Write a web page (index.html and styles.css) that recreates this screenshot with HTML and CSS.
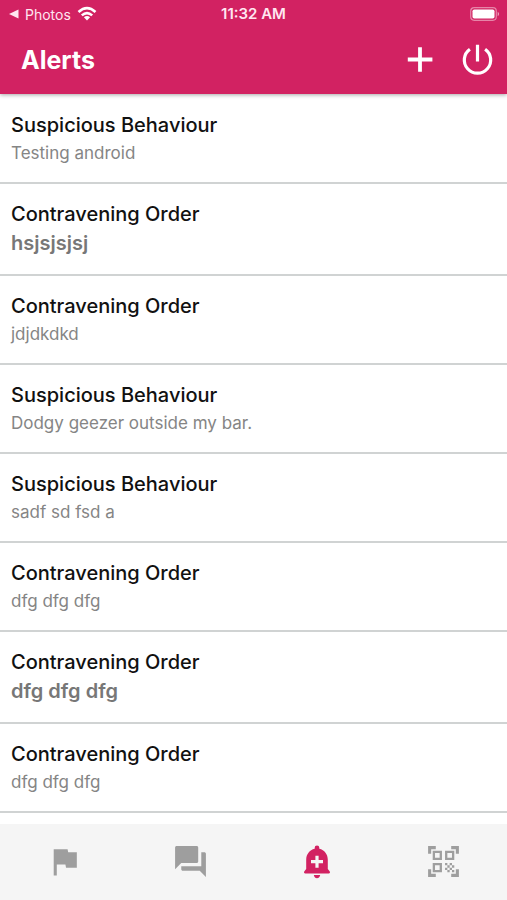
FILE: index.html
```html
<!DOCTYPE html>
<html lang="en">
<head>
<meta charset="utf-8">
<meta name="viewport" content="width=device-width, initial-scale=1">
<title>Alerts</title>
<link rel="stylesheet" href="styles.css">
</head>
<body>
<header class="top">
  <div class="status">
    <div class="status-left">
      <svg width="10" height="10" viewBox="0 0 10 10" fill="currentColor" aria-hidden="true"><path d="M0 5 9.500.5v9z"/></svg>
      <span class="back">Photos</span>
      <svg class="wifi" width="20" height="16" viewBox="0 0 20 16" fill="none" stroke="currentColor" stroke-width="2.6" aria-hidden="true"><path d="M1.500 6Q10-1.800 18.500 6M4.800 9.400Q10 4.800 15.200 9.400"/><path d="M10 14.500 6.900 11.300Q10 8.900 13.100 11.300z" fill="currentColor" stroke="none"/></svg>
    </div>
    <time class="clock">11:32 AM</time>
    <div class="status-right">
      <svg width="29" height="14" viewBox="0 0 29 14" aria-hidden="true"><rect x=".7" y=".7" width="25.600" height="12.600" rx="3.500" fill="none" stroke="#fff" stroke-opacity=".45" stroke-width="1.200"/><rect x="2.500" y="2.500" width="22" height="9" rx="1.800" fill="#fff"/><path d="M27.700 4.700q3 2.300 0 4.600z" fill="#fff" fill-opacity=".55"/></svg>
    </div>
  </div>
  <div class="bar">
    <h1>Alerts</h1>
    <div class="actions">
      <button type="button" aria-label="Add alert"><svg width="34" height="34" viewBox="0 0 34 34" fill="none" stroke="currentColor" stroke-width="3.800"><path d="M4.800 16.500h24.600M17 4.200v24.600"/></svg></button>
      <button type="button" aria-label="Log out"><svg width="34" height="34" viewBox="0 0 34 34" fill="none" stroke="currentColor" stroke-width="3.200"><path d="M17.500 1.800V18.500M9.900 6.200a13.200 13.200 0 1 0 15.200 0"/></svg></button>
    </div>
  </div>
</header>
<main>
  <ul class="alerts">
    <li><h2>Suspicious Behaviour</h2><p>Testing android</p></li>
    <li class="unread"><h2>Contravening Order</h2><p>hsjsjsjsj</p></li>
    <li><h2>Contravening Order</h2><p>jdjdkdkd</p></li>
    <li><h2>Suspicious Behaviour</h2><p>Dodgy geezer outside my bar.</p></li>
    <li><h2>Suspicious Behaviour</h2><p>sadf sd fsd a</p></li>
    <li><h2>Contravening Order</h2><p>dfg dfg dfg</p></li>
    <li class="unread"><h2>Contravening Order</h2><p>dfg dfg dfg</p></li>
    <li><h2>Contravening Order</h2><p>dfg dfg dfg</p></li>
  </ul>
</main>
<nav class="tabs" aria-label="Main">
  <a href="#reports" aria-label="Reports"><svg viewBox="0 0 24 24"><path d="M14.400 6 14 4H5v17h2v-7h5.600l.4 2h7V6z"/></svg></a>
  <a href="#messages" aria-label="Messages"><svg viewBox="0 0 24 24"><path d="M21 6h-2v9H6v2c0 .55.45 1 1 1h11l4 4V7c0-.55-.45-1-1-1zm-4 6V3c0-.55-.45-1-1-1H3c-.55 0-1 .45-1 1v14l4-4h10c.55 0 1-.45 1-1z"/></svg></a>
  <a href="#alerts" class="current" aria-current="page" aria-label="Alerts"><svg viewBox="1 .5 37 37"><path fill-rule="evenodd" d="M16.700 6.300V5.300a2.300 2.300 0 0 1 4.600 0v1c5.200 1.200 8.500 5.500 8.500 10.900v9.300l2 2.500q.8 2-1 2H7.200q-1.800 0-1-2l2-2.500v-9.300c0-5.400 3.300-9.700 8.500-10.900zM17.400 13.200v4.400H13v3.200h4.400v4.400h3.200v-4.400H25v-3.200h-4.400v-4.400zM15.800 32.600h6.400q-.8 3.200-3.200 3.200t-3.200-3.200z"/></svg></a>
  <a href="#scan" aria-label="Scan code"><svg viewBox="0 0 24 24"><path d="M9.500 6.500v3h-3v-3h3M11 5H5v6h6V5zm-1.500 9.500v3h-3v-3h3M11 13H5v6h6v-6zm6.500-6.500v3h-3v-3h3M19 5h-6v6h6V5zm-6 8h1.500v1.500H13V13zm1.500 1.500H16V16h-1.500v-1.500zM16 13h1.500v1.500H16V13zm-3 3h1.500v1.500H13V16zm1.500 1.500H16V19h-1.500v-1.500zM16 16h1.500v1.500H16V16zm1.500-1.500H19V16h-1.500v-1.500zm0 3H19V19h-1.500v-1.500zM22 7h-2V4h-3V2h5v5zm0 15v-5h-2v3h-3v2h5zM2 22h5v-2H4v-3H2v5zM2 2v5h2V4h3V2H2z"/></svg></a>
</nav>
</body>
</html>
```
FILE: styles.css
```css
* { box-sizing: border-box; }
body {
  margin: 0;
  min-height: 100vh;
  display: flex;
  flex-direction: column;
  background: #fff;
  color: #111;
  font-family: Inter, "Liberation Sans", sans-serif;
}
h1, h2, p, ul { margin: 0; padding: 0; }
svg { display: block; }

.top {
  position: sticky;
  top: 0;
  background: #d22262;
  color: #fff;
  box-shadow: 0 1px 4px rgba(0, 0, 0, .35);
}
.status {
  display: grid;
  grid-template-columns: 1fr auto 1fr;
  align-items: center;
  height: 28px;
  padding: 0 8px;
  font-size: 14px;
}
.status-left { display: flex; align-items: center; gap: 6px; padding-left: 1px; color: #ffe6f0; }
.wifi { color: #fff; }
.clock { font-size: 15px; line-height: 18px; font-weight: 600; color: #ffe6f0; }
.status-right { display: flex; justify-content: flex-end; }
.bar {
  display: flex;
  align-items: center;
  justify-content: space-between;
  height: 66px;
  padding: 0 13px 2px 21px;
}
h1 { font-size: 25px; line-height: 32px; font-weight: 700; }
.actions { display: flex; gap: 23px; }
button { padding: 0; border: 0; background: none; color: inherit; }

main { flex: 1; }
.alerts { list-style: none; padding-top: 1px; }
.alerts li {
  padding: 18px 11px;
  border-bottom: 2px solid #d0d3d3;
}
h2 { font-size: 20px; line-height: 24px; font-weight: 550; }
.alerts p { padding-top: 5px; font-size: 17px; line-height: 22px; color: #858585; }
.alerts .unread p { font-size: 20px; line-height: 25px; font-weight: 600; color: #777; }

.tabs {
  position: sticky;
  bottom: 0;
  display: grid;
  grid-template-columns: repeat(4, 1fr);
  height: 76px;
  padding: 0 0 2px 1px;
  background: #f5f5f5;
}
.tabs a { display: flex; align-items: center; justify-content: center; color: #9e9e9e; }
.tabs .current { color: #d22262; }
.tabs svg { width: 37px; height: 37px; fill: currentColor; }
```
